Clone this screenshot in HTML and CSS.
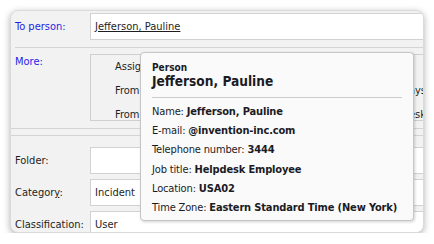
FILE: index.html
```html
<!DOCTYPE html>
<html lang="en">
<head>
    <meta charset="UTF-8">
    <meta name="viewport" content="width=device-width, initial-scale=1.0">
    <title>Person tooltip</title>
    <link rel="stylesheet" href="styles.css">
</head>
<body>
    <div class="window">
        <div class="row">
            <label class="lbl link">To person:</label>
            <div class="field"><span class="person">Jefferson, Pauline</span></div>
        </div>
        <div class="sep"></div>
        <div class="row row-top">
            <label class="lbl link">More:</label>
            <div class="more">
                <div class="opt"><span>Assigned to me</span><span></span></div>
                <div class="opt"><span>From my department</span><span>Last 30 days</span></div>
                <div class="opt"><span>From my groups</span><span>Helpdesk</span></div>
            </div>
        </div>
        <div class="divider"></div>
        <div class="row">
            <label class="lbl">Folder:</label>
            <div class="field"></div>
        </div>
        <div class="row">
            <label class="lbl">Categor<u>y</u>:</label>
            <div class="field">Incident</div>
        </div>
        <div class="row">
            <label class="lbl">Classification:</label>
            <div class="field">User</div>
        </div>

        <div class="tip">
            <div class="tip-kind">Person</div>
            <div class="tip-title">Jefferson, Pauline</div>
            <ul class="tip-list">
                <li>Name: <b>Jefferson, Pauline</b></li>
                <li>E-mail: <b>@invention-inc.com</b></li>
                <li>Telephone number: <b>3444</b></li>
                <li>Job title: <b>Helpdesk Employee</b></li>
                <li>Location: <b>USA02</b></li>
                <li>Time Zone: <b>Eastern Standard Time (New York)</b></li>
            </ul>
        </div>
    </div>
</body>
</html>
```

FILE: styles.css
```css
body {
    margin: 0;
    background: #ffffff;
    font-family: "DejaVu Sans Condensed", "DejaVu Sans", sans-serif;
    font-size: 11px;
    color: #1e1e1e;
}
.window {
    position: relative;
    margin: 10px 0 0 10px;
    width: 414px;
    height: 223px;
    padding-top: 2px;
    box-sizing: border-box;
    background: #f2f2f2;
    border: 1px solid #dadada;
    border-radius: 8px;
    box-shadow: 0 2px 7px rgba(0, 0, 0, 0.3);
    overflow: hidden;
}
.row {
    display: grid;
    grid-template-columns: 79px 1fr;
    align-items: center;
    margin-bottom: 5px;
}
.row-top {
    align-items: start;
}
.lbl {
    padding-left: 4px;
}
.row-top .lbl {
    padding-top: 1px;
}
.link {
    color: #1f1fe6;
}
.field {
    height: 27px;
    line-height: 25px;
    box-sizing: border-box;
    margin-right: -10px;
    padding-left: 4px;
    background: #ffffff;
    border: 1px solid #d2d2d2;
}
.person {
    text-decoration: underline;
}
.sep {
    height: 1px;
    margin: 7px 0 6px 4px;
    background: #d4d4d4;
}
.more {
    height: 67px;
    box-sizing: border-box;
    margin-right: -12px;
    padding: 0 0 0 24px;
    border: 1px solid #cfcfcf;
    overflow: hidden;
}
.opt {
    display: flex;
    justify-content: space-between;
    line-height: 24px;
    padding-right: 8px;
}
.divider {
    height: 6px;
    margin: 7px 0 11px;
    border-top: 1px solid #d4d4d4;
    border-bottom: 1px solid #d4d4d4;
}
.tip {
    position: absolute;
    left: 129px;
    top: 41px;
    width: 274px;
    height: 169px;
    box-sizing: border-box;
    padding: 9px 8px 0 11px;
    background: #fafafa;
    border: 1px solid #c6c6c6;
    border-radius: 4px;
    box-shadow: 1px 1px 3px rgba(0, 0, 0, 0.18);
    color: #1b1b24;
}
.tip-kind {
    font-size: 10px;
    font-weight: bold;
    line-height: 12px;
}
.tip-title {
    font-size: 13.6px;
    font-weight: bold;
    line-height: 16px;
    margin-top: -1px;
    margin-right: 3px;
    padding-bottom: 8px;
    border-bottom: 1px solid #cdcdcd;
}
.tip-list {
    list-style: none;
    margin: 0;
    padding: 4px 0 0;
}
.tip-list li {
    line-height: 19.2px;
    white-space: nowrap;
    letter-spacing: -0.15px;
}
```
